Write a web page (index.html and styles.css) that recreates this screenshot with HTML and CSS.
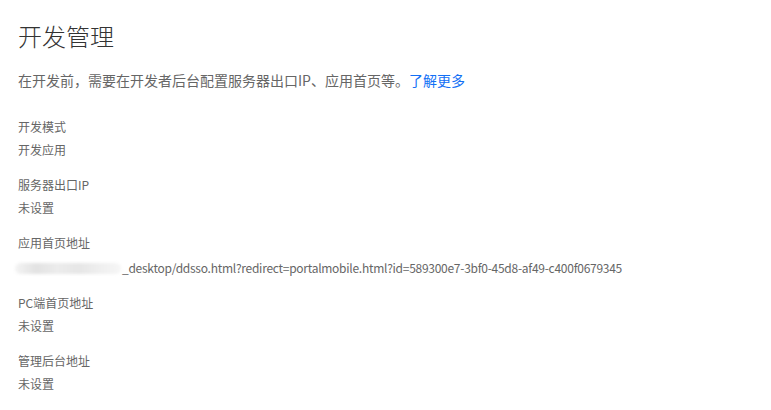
FILE: index.html
```html
<!DOCTYPE html>
<html lang="zh-CN">
<head>
<meta charset="utf-8">
<link rel="stylesheet" href="styles.css">
</head>
<body>
<div class="page">
  <h1 class="title">开发管理</h1>
  <p class="desc">在开发前，需要在开发者后台配置服务器出口IP、应用首页等。<a class="link" href="#">了解更多</a></p>
  <div class="list">
    <div class="item">
      <div class="label">开发模式</div>
      <div class="value">开发应用</div>
    </div>
    <div class="item">
      <div class="label">服务器出口IP</div>
      <div class="value">未设置</div>
    </div>
    <div class="item">
      <div class="label">应用首页地址</div>
      <div class="value url"><span class="blur"></span><span class="url-text">_desktop/ddsso.html?redirect=portalmobile.html?id=589300e7-3bf0-45d8-af49-c400f0679345</span></div>
    </div>
    <div class="item">
      <div class="label">PC端首页地址</div>
      <div class="value">未设置</div>
    </div>
    <div class="item">
      <div class="label">管理后台地址</div>
      <div class="value">未设置</div>
    </div>
  </div>
</div>
</body>
</html>
```
FILE: styles.css
```css
html, body {
  margin: 0;
  padding: 0;
  background: #ffffff;
}
body {
  font-family: "Noto Sans CJK SC", "Noto Sans", sans-serif;
  color: #666666;
}
.page {
  padding: 20px 18px 0 18px;
}
.title {
  margin: 0;
  font-size: 24px;
  line-height: 32px;
  font-weight: 300;
  color: #333333;
}
.desc {
  margin: 18px 0 0 0;
  font-size: 14px;
  line-height: 20px;
  color: #666666;
}
.link {
  color: #1270f5;
  text-decoration: none;
}
.list {
  margin-top: 27px;
  display: flex;
  flex-direction: column;
}
.item {
  display: flex;
  flex-direction: column;
  gap: 3px;
  margin-bottom: 15px;
}
.label, .value {
  font-size: 12px;
  line-height: 20px;
  color: #666666;
}
.url {
  display: flex;
  align-items: center;
  margin-left: -3px;
  padding-top: 2px;
}
.url-text {
  letter-spacing: -0.27px;
}
.blur {
  display: inline-block;
  width: 106px;
  height: 11px;
  background: linear-gradient(90deg, #f4f4f4 0%, #e2e2e2 20%, #ececec 40%, #e6e6e6 60%, #efefef 80%, #f6f6f6 100%);
  filter: blur(1.5px);
  border-radius: 6px;
  margin-right: 1px;
}
```
